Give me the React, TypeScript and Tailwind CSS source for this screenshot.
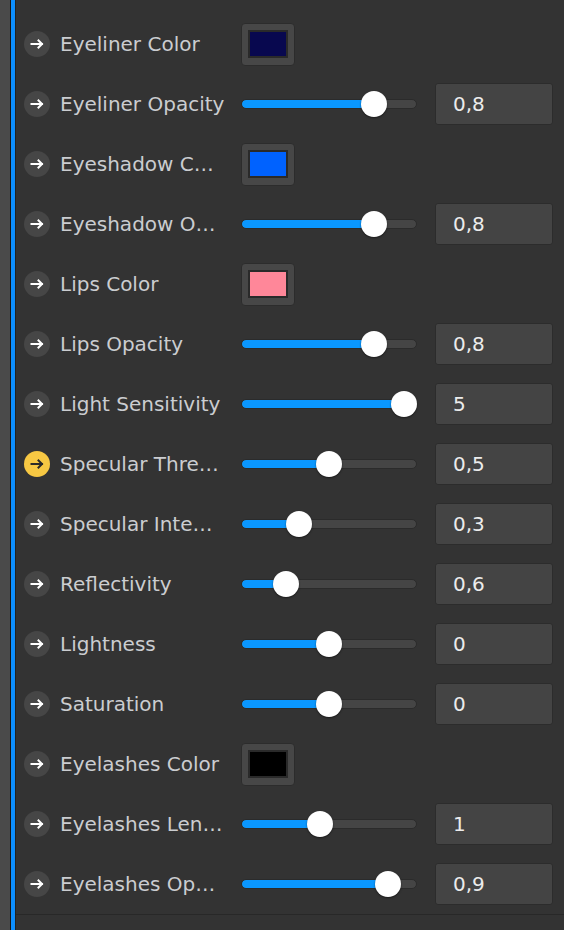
import React from 'react';

type Row = {
  label: string;
  kind: 'color' | 'slider';
  color?: string;
  frac?: number;
  value?: string;
  active?: boolean;
};

const rows: Row[] = [
  { label: 'Eyeliner Color', kind: 'color', color: '#08084f' },
  { label: 'Eyeliner Opacity', kind: 'slider', frac: 0.8, value: '0,8' },
  { label: 'Eyeshadow C…', kind: 'color', color: '#0062ff' },
  { label: 'Eyeshadow O…', kind: 'slider', frac: 0.8, value: '0,8' },
  { label: 'Lips Color', kind: 'color', color: '#ff8799' },
  { label: 'Lips Opacity', kind: 'slider', frac: 0.8, value: '0,8' },
  { label: 'Light Sensitivity', kind: 'slider', frac: 1, value: '5' },
  { label: 'Specular Thre…', kind: 'slider', frac: 0.5, value: '0,5', active: true },
  { label: 'Specular Inte…', kind: 'slider', frac: 0.3, value: '0,3' },
  { label: 'Reflectivity', kind: 'slider', frac: 0.21, value: '0,6' },
  { label: 'Lightness', kind: 'slider', frac: 0.5, value: '0' },
  { label: 'Saturation', kind: 'slider', frac: 0.5, value: '0' },
  { label: 'Eyelashes Color', kind: 'color', color: '#000000' },
  { label: 'Eyelashes Len…', kind: 'slider', frac: 0.44, value: '1' },
  { label: 'Eyelashes Op…', kind: 'slider', frac: 0.89, value: '0,9' },
];

function ArrowIcon({ active }: { active?: boolean }) {
  return (
    <div
      className={`w-[26px] h-[26px] rounded-full flex items-center justify-center shrink-0 ${
        active ? 'bg-[#f7c843] text-[#2a2a2a]' : 'bg-[#464646] text-white'
      }`}
    >
      <svg width="14" height="10" viewBox="0 0 14 10" fill="none" stroke="currentColor" strokeWidth="2" strokeLinecap="square">
        <path d="M1.5 5h10.5" />
        <path d="M8.5 1.5 12 5l-3.5 3.5" />
      </svg>
    </div>
  );
}

function Slider({ frac }: { frac: number }) {
  const center = 13 + frac * 150;
  return (
    <div className="relative w-[176px] h-[26px] flex items-center shrink-0">
      <div className="w-full h-[10px] rounded-full bg-[#454545] border border-[#2b2b2b] overflow-hidden">
        <div className="h-full bg-[#0a97ff] rounded-full" style={{ width: center }} />
      </div>
      <div
        className="absolute top-0 w-[26px] h-[26px] rounded-full bg-white shadow-[0_1px_2px_rgba(0,0,0,0.5)]"
        style={{ left: center - 13 }}
      />
    </div>
  );
}

function Swatch({ color }: { color: string }) {
  return (
    <div className="w-[54px] h-[43px] rounded-[4px] bg-[#474747] border border-[#2c2c2c] flex items-center justify-center">
      <div className="w-[40px] h-[28px] border-2 border-[#2a2a2a]" style={{ background: color }} />
    </div>
  );
}

export default function App() {
  return (
    <div className="flex w-[564px] h-[930px] bg-[#333333] overflow-hidden" style={{ fontFamily: '"DejaVu Sans", "Lucida Grande", sans-serif' }}>
      <div className="w-[10px] bg-[#4a4a4a] shrink-0" />
      <div className="w-[1px] bg-[#151515] shrink-0" />
      <div className="w-[4px] bg-[#0d8fff] shrink-0" />
      <div className="w-[1px] bg-[#222222] shrink-0" />
      <div className="flex-1 flex flex-col pt-[14px]">
        <div className="flex flex-col border-b border-[#282828]">
          {rows.map((r) => (
            <div key={r.label} className="h-[60px] flex items-center pl-[8px]">
              <ArrowIcon active={r.active} />
              <div className="w-[191px] pl-[10px] text-[20px] text-[#cbcdd0] whitespace-nowrap overflow-hidden shrink-0">
                {r.label}
              </div>
              {r.kind === 'color' ? (
                <Swatch color={r.color!} />
              ) : (
                <>
                  <Slider frac={r.frac!} />
                  <div className="ml-[18px] w-[118px] h-[42px] rounded-[3px] bg-[#444444] border border-[#2c2c2c] flex items-center pl-[17px] text-[20px] text-[#ececec]">
                    {r.value}
                  </div>
                </>
              )}
            </div>
          ))}
        </div>
      </div>
    </div>
  );
}
